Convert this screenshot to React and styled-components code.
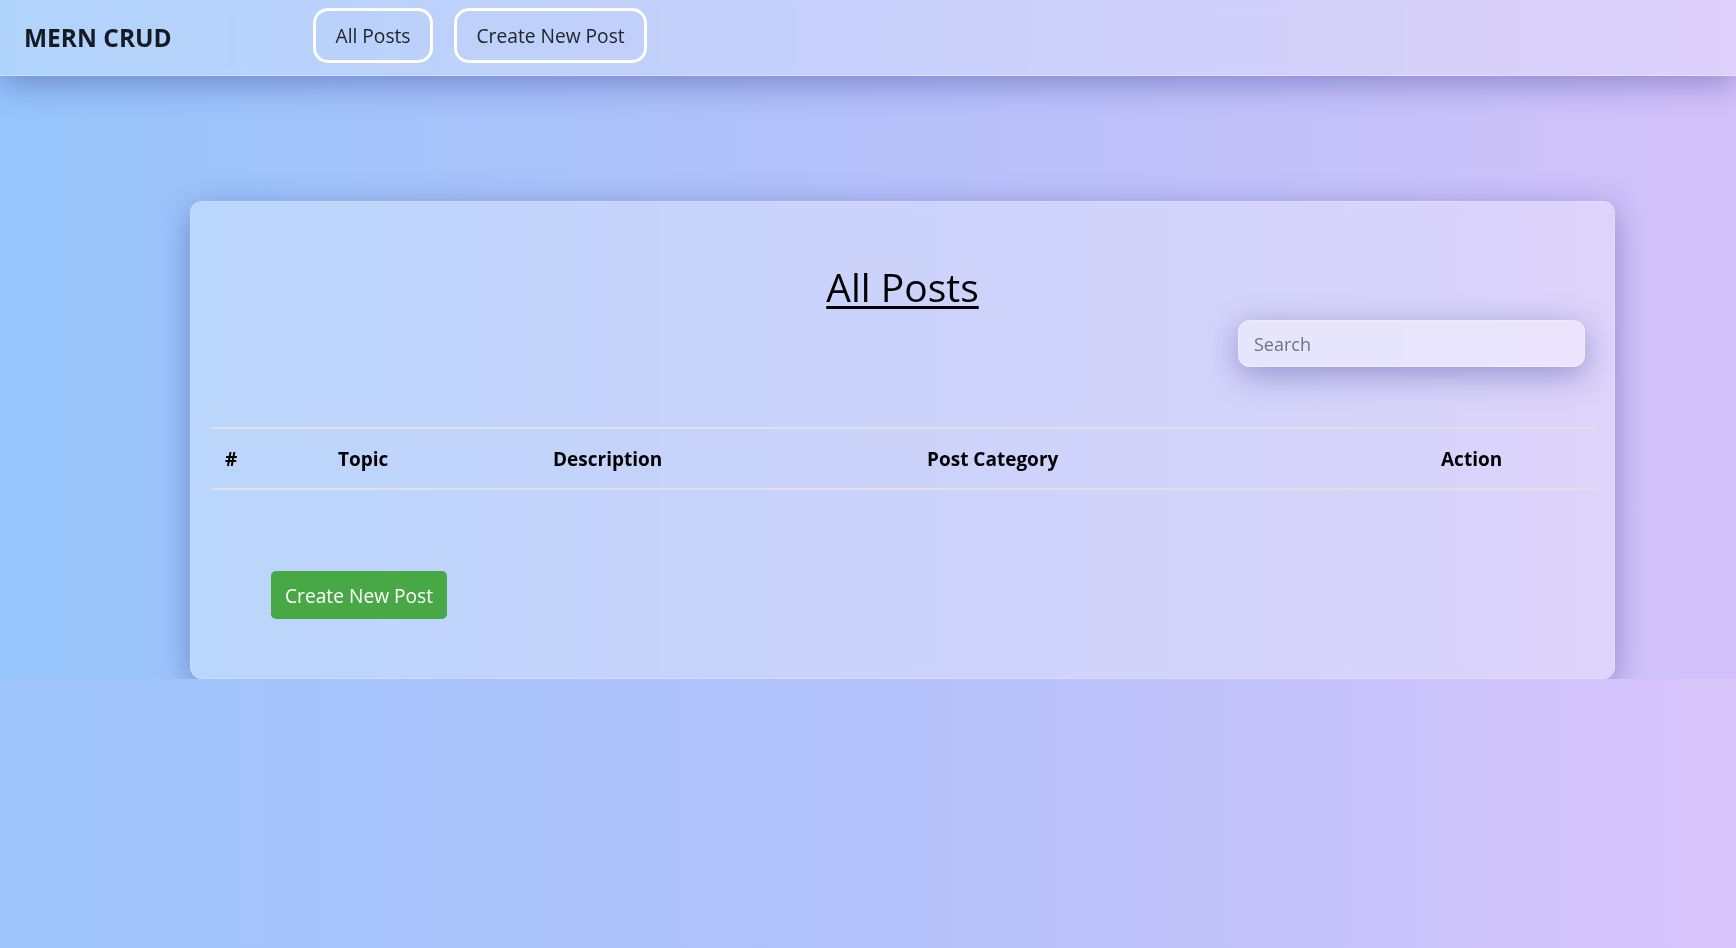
import styled, { createGlobalStyle } from "styled-components";

const columns = [
  { label: "#", width: 113 },
  { label: "Topic", width: 215 },
  { label: "Description", width: 374 },
  { label: "Post Category", width: 514 },
  { label: "Action", width: 169 },
];

function App() {
  return (
    <>
      <GlobalStyle />
      <Page>
        <Header>
          <Brand>MERN CRUD</Brand>
          <Nav>
            <NavButton href="#">All Posts</NavButton>
            <NavButton href="#">Create New Post</NavButton>
          </Nav>
        </Header>

        <Main>
          <Card>
            <Title>All Posts</Title>
            <SearchRow>
              <SearchInput type="search" placeholder="Search" />
            </SearchRow>

            <PostsTable>
              <thead>
                <tr>
                  {columns.map((col) => (
                    <Th key={col.label} $width={col.width}>
                      {col.label}
                    </Th>
                  ))}
                </tr>
              </thead>
              <tbody />
            </PostsTable>

            <CreateButton>Create New Post</CreateButton>
          </Card>
        </Main>
      </Page>
    </>
  );
}

export default App;

const GlobalStyle = createGlobalStyle`
  html {
    min-height: 100%;
    background: linear-gradient(90deg, #9dc4fb 0%, #b3c1fa 50%, #d8c4fb 100%);
  }

  body {
    margin: 0;
    font-family: "Open Sans", "Noto Sans", sans-serif;
    color: #212529;
  }
`;

const Page = styled.div`
  background: linear-gradient(90deg, #96c5fb 0%, #b5c0f9 50%, #d3c2fa 100%);
`;

const Header = styled.header`
  display: flex;
  align-items: center;
  height: 76px;
  box-sizing: border-box;
  padding: 0 24px;
  background: rgba(255, 255, 255, 0.25);
  border-bottom: 1px solid rgba(255, 255, 255, 0.3);
  box-shadow: 0 8px 32px rgba(31, 38, 135, 0.37);
  backdrop-filter: blur(4px);
`;

const Brand = styled.div`
  flex: 0 0 289px;
  font-size: 24.5px;
  font-weight: 700;
  color: #161a22;
`;

const Nav = styled.nav`
  display: flex;
  gap: 21px;
  align-self: flex-start;
  margin-top: 8px;
`;

const NavButton = styled.a`
  display: flex;
  align-items: center;
  height: 55px;
  box-sizing: border-box;
  padding: 0 19.5px;
  border: 3px solid #fff;
  border-radius: 15px;
  font-size: 19.2px;
  color: #212529;
  text-decoration: none;
`;

const Main = styled.main`
  padding: 125px 121px 0 190px;
`;

const Card = styled.section`
  padding: 61px 20px 59px;
  border: 1px solid rgba(255, 255, 255, 0.18);
  border-radius: 12px;
  background: rgba(255, 255, 255, 0.3);
  box-shadow: 0 8px 32px rgba(31, 38, 135, 0.37);
  backdrop-filter: blur(4px);
`;

const Title = styled.h1`
  margin: 0;
  text-align: center;
  font-size: 39px;
  font-weight: 500;
  line-height: 48px;
  color: #000;
  text-decoration: underline;
  text-decoration-thickness: 3px;
  text-underline-offset: 4px;
`;

const SearchRow = styled.div`
  display: flex;
  justify-content: flex-end;
  margin-top: 9px;
  padding-right: 9px;
`;

const SearchInput = styled.input`
  width: 347px;
  height: 47px;
  box-sizing: border-box;
  padding: 0 15px;
  border: 1px solid rgba(255, 255, 255, 0.3);
  border-radius: 12px;
  background: rgba(255, 255, 255, 0.4);
  box-shadow: 0 8px 32px rgba(31, 38, 135, 0.37);
  font-family: "Open Sans", sans-serif;
  font-size: 18px;
  color: #212529;
  outline: none;

  &::placeholder {
    color: #6c757d;
  }
`;

const PostsTable = styled.table`
  width: 100%;
  margin-top: 60px;
  border-collapse: collapse;
  table-layout: fixed;
`;

const Th = styled.th`
  width: ${(p) => p.$width}px;
  box-sizing: border-box;
  padding: 16px 15px 14px 14px;
  text-align: left;
  font-size: 19px;
  font-weight: 700;
  line-height: 29px;
  color: #000;
  border-top: 2px solid #dee2e6;
  border-bottom: 2px solid #dee2e6;
`;

const CreateButton = styled.button`
  display: block;
  height: 48px;
  margin: 81px 0 0 60px;
  padding: 0 14px;
  border: none;
  border-radius: 5px;
  background: #48a846;
  font-family: "Open Sans", sans-serif;
  font-size: 19.2px;
  color: #fff;
  cursor: pointer;
`;
